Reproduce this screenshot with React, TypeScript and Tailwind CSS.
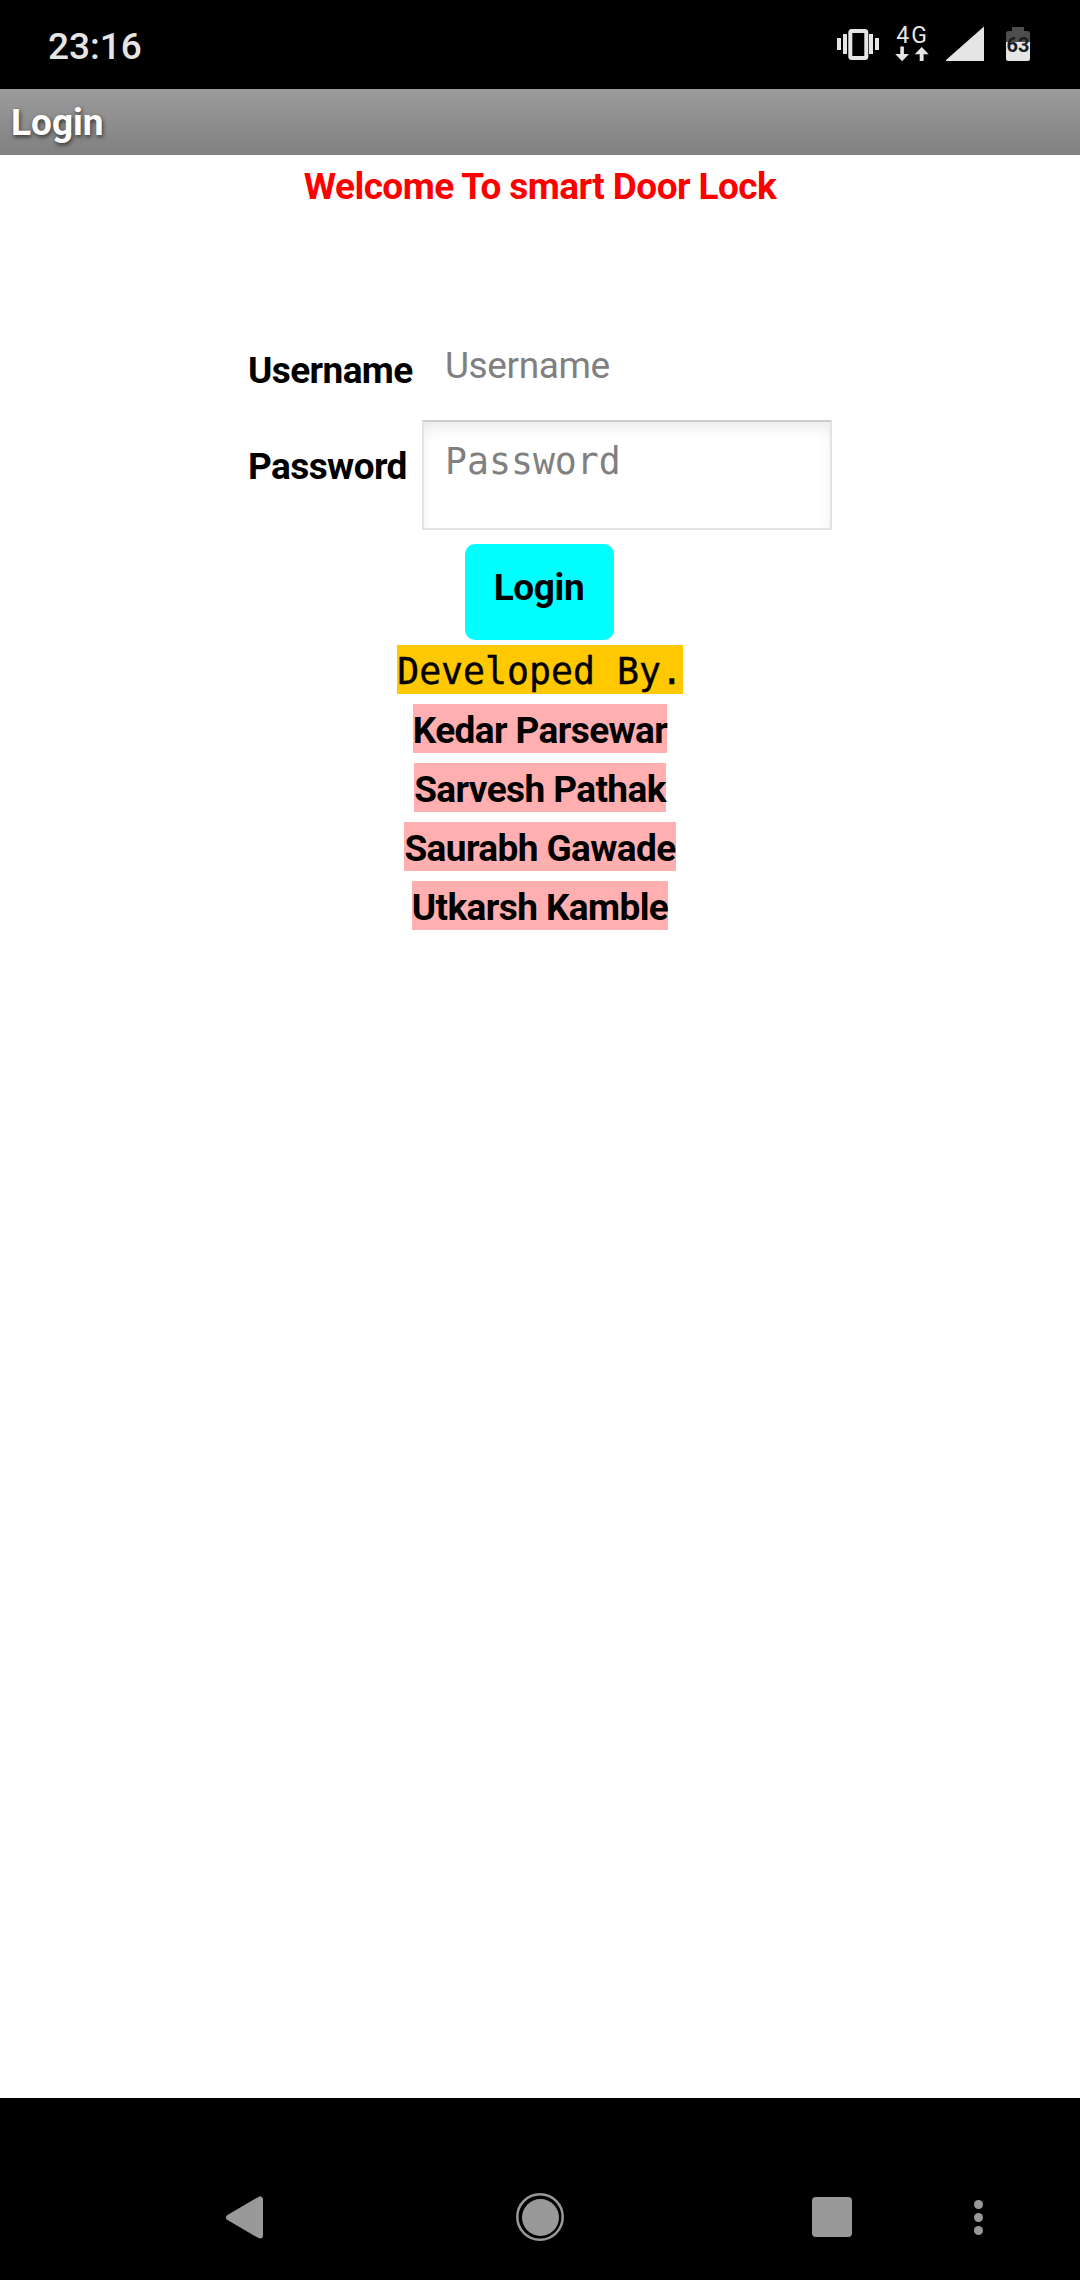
import type { ReactNode } from "react";

function StatusBar() {
  return (
    <header className="flex h-[89px] items-start justify-between bg-black pl-12 pr-[50px] text-[#e5e5e5]">
      <span className="pt-[24px] text-[37px] font-medium leading-[46px]">23:16</span>
      <div className="flex pt-[22px]">
        <svg className="h-11 w-[46px]" viewBox="836 22 46 44" fill="#e5e5e5">
          <rect x="837" y="38" width="4" height="12" />
          <rect x="843" y="34" width="4" height="20" />
          <rect x="869" y="34" width="4" height="20" />
          <rect x="875" y="38" width="4" height="12" />
          <rect x="850.3" y="31" width="16" height="27" rx="1.5" fill="none" stroke="#e5e5e5" strokeWidth="4" />
        </svg>
        <div className="ml-3 flex h-11 w-[36px] flex-col items-center">
          <span className="h-[22px] shrink-0 pl-[1px] text-[23px] leading-[28px] tracking-[2px]">4G</span>
          <svg className="h-[18px] w-[36px] shrink-0" viewBox="894 44 36 18" fill="#e5e5e5">
            <path d="M900.3 46.5h3.6v7.5h5.1l-6.9 7.2-6.9-7.2h5.1zM919.7 61h3.9v-6.7h5.1l-7-7.3-7 7.3h5z" />
          </svg>
        </div>
        <svg className="ml-4 h-11 w-[38px]" viewBox="946 22 38 44" fill="#e5e5e5">
          <path d="M984 26.5V61h-39z" />
        </svg>
        <svg className="ml-[22px] h-11 w-6" viewBox="1006 22 24 44">
          <path d="M1012 27h12v4h3.5a2.5 2.5 0 0 1 2.5 2.5V43h-24v-9.500a2.500 2.500 0 0 1 2.500-2.500h3.500z" fill="#4d4d4d" />
          <path d="M1006 42h24v16.500a2.500 2.500 0 0 1-2.500 2.500h-19a2.500 2.500 0 0 1-2.500-2.500z" fill="#e5e5e5" />
          <text x="1018" y="52" textAnchor="middle" className="text-[20px] font-bold" fill="#1c1c1c">63</text>
        </svg>
      </div>
    </header>
  );
}

function Credit({ children }: { children: ReactNode }) {
  return <p className="h-[49px] bg-[#ffafaf] text-[37px] font-bold leading-[53px] tracking-[-0.6px]">{children}</p>;
}

function NavigationBar() {
  return (
    <nav className="flex h-[182px] items-end bg-black pb-[39px] pl-[225px]">
      <svg className="h-12 w-[39px]" viewBox="0 0 39 48" fill="#999" stroke="#999" strokeWidth="6" strokeLinejoin="round">
        <path d="M35 6.500v36L4 24.500z" />
      </svg>
      <svg className="ml-[252px] h-12 w-12" viewBox="0 0 48 48">
        <circle cx="24" cy="24" r="22.700" fill="none" stroke="#999" strokeWidth="2.500" />
        <circle cx="24.500" cy="24.500" r="18.500" fill="#999" />
      </svg>
      <div className="mb-1 ml-[248px] h-10 w-10 rounded-[4px] bg-[#999]" />
      <div className="mb-[6px] ml-[122px] flex flex-col gap-1">
        <i className="size-[9px] rounded-full bg-[#999]" />
        <i className="size-[9px] rounded-full bg-[#999]" />
        <i className="size-[9px] rounded-full bg-[#999]" />
      </div>
    </nav>
  );
}

export default function App() {
  return (
    <div className="flex h-[2280px] w-[1080px] flex-col bg-white font-['Roboto',sans-serif] text-black">
      <StatusBar />
      <h1 className="h-[66px] bg-linear-to-b from-[#9c9c9c] to-[#808080] pl-[11px] text-[37px] font-bold leading-[68px] text-white [text-shadow:1px_2px_4px_#333]">
        Login
      </h1>
      <main className="flex flex-1 flex-col items-center pt-[5px]">
        <h2 className="h-[49px] text-[37px] font-bold leading-[53px] tracking-[-0.58px] text-[#ff0000]">Welcome To smart Door Lock</h2>
        <form className="mt-[115px] grid w-[584px] grid-cols-[174px_410px] grid-rows-[96px_110px]">
          <label htmlFor="username" className="pt-[20px] text-[37px] font-bold leading-[53px] tracking-[-0.6px]">Username</label>
          <input
            id="username"
            placeholder="Username"
            className="mt-[15px] h-[53px] self-start pl-[23px] text-[37px] tracking-[-0.4px] outline-none placeholder:text-[#808080] placeholder:opacity-100"
          />
          <label htmlFor="password" className="pt-[20px] text-[37px] font-bold leading-[53px] tracking-[-0.6px]">Password</label>
          <input
            id="password"
            type="password"
            placeholder="Password"
            className="h-[110px] border-2 border-[#e2e2e2] border-t-[#cdcdcd] pb-[27px] pl-[21px] font-['DejaVu_Sans_Mono',monospace] text-[36.5px] shadow-[inset_0_8px_16px_-4px_#e6e6e6] outline-none placeholder:text-[#808080] placeholder:opacity-100"
          />
        </form>
        <button className="mr-[2px] mt-[14px] h-24 w-[149px] rounded-[10px] bg-[#00ffff] pb-[8px] text-[37px] font-bold tracking-[-0.4px]">Login</button>
        <section className="mt-[5px] flex flex-col items-center gap-[10px]">
          <p className="h-[49px] bg-[#ffc800] font-['DejaVu_Sans_Mono',monospace] text-[36.5px] leading-[53px] [-webkit-text-stroke:0.4px_black]">Developed By.</p>
          <Credit>Kedar Parsewar</Credit>
          <Credit>Sarvesh Pathak</Credit>
          <Credit>Saurabh Gawade</Credit>
          <Credit>Utkarsh Kamble</Credit>
        </section>
      </main>
      <NavigationBar />
    </div>
  );
}
